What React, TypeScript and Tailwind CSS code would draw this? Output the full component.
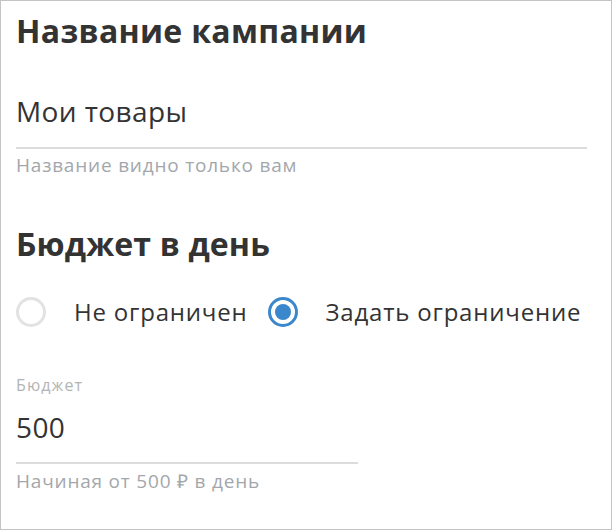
const Radio = ({ checked, label }: { checked?: boolean; label: string }) => {
  return (
    <label className="flex items-center gap-[28px]">
      {checked ? (
        <span className="flex w-[30px] h-[30px] items-center justify-center rounded-full border-[3px] border-[#3a87cb]">
          <span className="w-[16px] h-[16px] rounded-full bg-[#3a87cb]" />
        </span>
      ) : (
        <span className="w-[30px] h-[30px] rounded-full border-[3px] border-[#e2e2e2]" />
      )}
      <span className="text-[24px] leading-[32px] tracking-[0.8px] text-[#333333]">{label}</span>
    </label>
  );
};

const App = () => {
  return (
    <div className="w-[612px] h-[530px] border border-[#c4c4c4] bg-white px-[15px] font-['Open_Sans',sans-serif]">
      <h1 className="mt-[10px] text-[32px] leading-[40px] font-bold tracking-[0.3px] text-[#333333]">Название кампании</h1>
      <div className="mt-[42px] w-[571px] border-b-2 border-[#dcdcdc] pb-[18px]">
        <div className="text-[28px] leading-[36px] tracking-[0.4px] text-[#333333]">Мои товары</div>
      </div>
      <p className="mt-[4px] text-[19px] leading-[24px] tracking-[0.8px] text-[#a3a7ab]">Название видно только вам</p>

      <h2 className="mt-[47px] text-[32px] leading-[40px] font-bold tracking-[0.15px] text-[#333333]">Бюджет в день</h2>
      <div className="mt-[32px] flex items-center gap-[20px]">
        <Radio label="Не ограничен" />
        <Radio checked label="Задать ограничение" />
      </div>

      <div className="mt-[47px] text-[16px] leading-[20px] tracking-[1.1px] text-[#b4b4b4]">Бюджет</div>
      <div className="mt-[14px] w-[342px] border-b-2 border-[#dcdcdc] pb-[17px]">
        <div className="text-[28px] leading-[36px] tracking-[0.4px] text-[#333333]">500</div>
      </div>
      <p className="mt-[5px] text-[19px] leading-[24px] tracking-[0.8px] text-[#a3a7ab]">Начиная от 500 ₽ в день</p>
    </div>
  );
};

export default App;
